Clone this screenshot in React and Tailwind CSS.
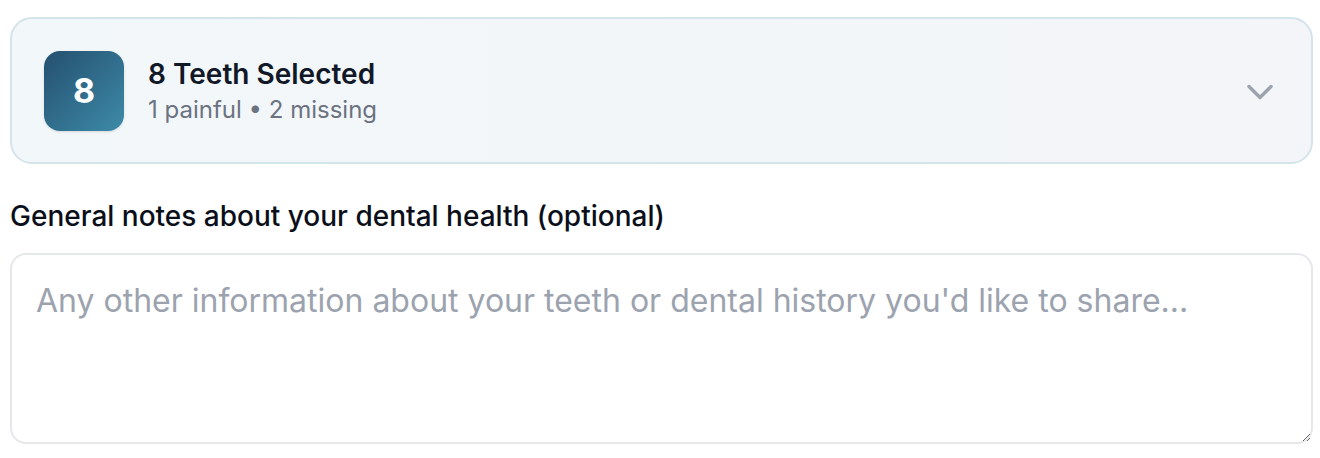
import React from "react";

export default function App() {
  return (
    <div className="w-[1320px] h-[458px] bg-white pl-[10px] pt-[17px] font-['Inter',sans-serif]">
      <div className="w-[1303px]">
        <div className="flex h-[147px] items-center rounded-[22px] border-2 border-[#d3e4eb] bg-gradient-to-r from-[#f2f7fa] to-[#f3f5f8] px-[32px]">
          <div className="flex h-[80px] w-[80px] shrink-0 items-center justify-center rounded-[16px] bg-gradient-to-br from-[#25506f] to-[#3d8ba9] shadow-sm">
            <span className="text-[34px] font-bold leading-none text-white">8</span>
          </div>
          <div className="mb-[2px] ml-[24px] flex flex-col">
            <span className="text-[28px] font-semibold leading-[40px] text-[#111827]">8 Teeth Selected</span>
            <span className="text-[24px] leading-[32px] text-[#6b7280]">1 painful • 2 missing</span>
          </div>
          <div className="ml-auto mr-[-3px] mt-[3px] text-[#9ca3af]">
            <svg width="44" height="44" viewBox="0 0 24 24" fill="none" stroke="currentColor" strokeWidth="1.9" strokeLinecap="round" strokeLinejoin="round">
              <path d="m6 9 6 6 6-6" />
            </svg>
          </div>
        </div>
        <label className="mt-[32px] block text-[28px] font-medium leading-[40px] text-[#0b0f1a]">
          General notes about your dental health (optional)
        </label>
        <textarea
          className="mt-[17px] block h-[191px] w-full rounded-[16px] border-2 border-[#e5e7eb] bg-white px-[24px] pt-[24px] text-[32px] leading-[44px] text-[#111827] outline-none placeholder:text-[#9ca3af]"
          placeholder="Any other information about your teeth or dental history you'd like to share..."
        />
      </div>
    </div>
  );
}
